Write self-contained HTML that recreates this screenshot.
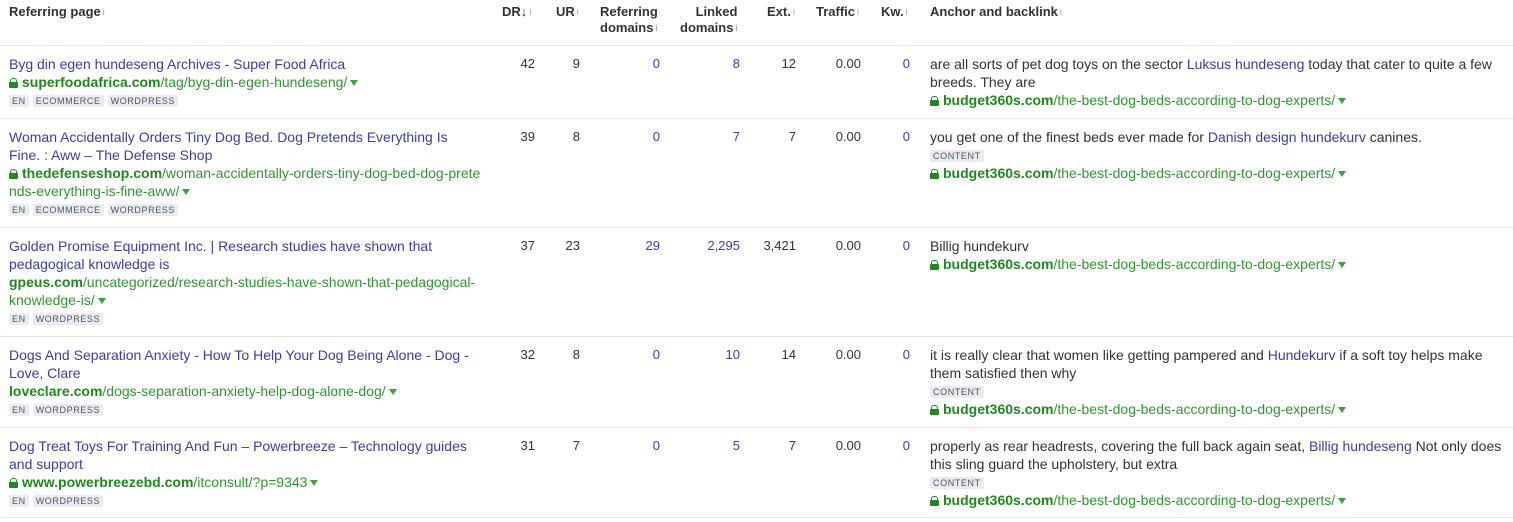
<!DOCTYPE html>
<html><head><meta charset="utf-8"><style>
*{margin:0;padding:0;box-sizing:border-box}
body{width:1513px;height:522px;background:#fff;font-family:"Liberation Sans",Arial,sans-serif;font-size:14px;color:#333;position:relative;overflow:hidden}
.h{position:absolute;top:4px;font-weight:bold;color:#333;line-height:16px;font-size:13px}
.h i{font-style:normal;font-weight:normal;color:#999;font-size:9px;vertical-align:top;margin-left:2px}
.r{text-align:right}
.row{position:absolute;left:0;width:1513px;border-top:1px solid #e4e4e4}
.c{position:absolute;top:9px;line-height:18px}
.n{font-size:13px}
.t{color:#3c3cad}
.g{color:#2f972f}
.g b{color:#1e8a1e}
.tag{display:inline-block;background:#e8ebf1;color:#555;font-size:9px;line-height:12px;padding:0 3px;margin-right:4px;border-radius:2px;letter-spacing:.6px;vertical-align:middle}
.lk{display:inline-block;width:9px;height:10px;position:relative;vertical-align:-1px;margin-right:4px}
.lk:before{content:"";position:absolute;left:1px;top:0;width:5px;height:5px;border:1.5px solid #1e8a1e;border-bottom:none;border-radius:3px 3px 0 0}
.lk:after{content:"";position:absolute;left:0;top:4px;width:9px;height:6px;background:#1e8a1e;border-radius:1px}
.ar{display:inline-block;width:0;height:0;border-left:4px solid transparent;border-right:4px solid transparent;border-top:6px solid #3fa03f;margin-left:3px;vertical-align:1px}
.bl{color:#3c3cad}
</style></head><body>
<div class="h" style="left:9px">Referring page<i>i</i></div>
<div class="h" style="left:502px">DR&#8595;<i>i</i></div>
<div class="h" style="left:556px">UR<i>i</i></div>
<div class="h" style="left:600px">Referring<br>domains<i>i</i></div>
<div class="h r" style="left:680px">Linked<br>domains<i>i</i></div>
<div class="h" style="left:767px">Ext.<i>i</i></div>
<div class="h" style="left:816px">Traffic<i>i</i></div>
<div class="h" style="left:881px">Kw.<i>i</i></div>
<div class="h" style="left:930px">Anchor and backlink<i>i</i></div>

<div class="row" style="top:45px;height:73px">
<div class="c" style="left:9px;width:480px"><div class="t">Byg din egen hundeseng Archives - Super Food Africa</div><div class="g"><span class="lk"></span><b>superfoodafrica.com</b>/tag/byg-din-egen-hundeseng/<span class="ar"></span></div><div><span class="tag">EN</span><span class="tag">ECOMMERCE</span><span class="tag">WORDPRESS</span></div></div>
<div class="c n r" style="right:978px">42</div><div class="c n r" style="right:933px">9</div><div class="c n r t" style="right:853px">0</div><div class="c n r t" style="right:773px">8</div><div class="c n r" style="right:717px">12</div><div class="c n r" style="right:652px">0.00</div><div class="c n r t" style="right:603px">0</div>
<div class="c" style="left:930px;width:575px">are all sorts of pet dog toys on the sector <span class="bl">Luksus hundeseng</span> today that cater to quite a few breeds. They are<div class="g"><span class="lk"></span><b>budget360s.com</b>/the-best-dog-beds-according-to-dog-experts/<span class="ar"></span></div></div>
</div>

<div class="row" style="top:118px;height:109px">
<div class="c" style="left:9px;width:480px"><div class="t">Woman Accidentally Orders Tiny Dog Bed. Dog Pretends Everything Is<br>Fine. : Aww – The Defense Shop</div><div class="g"><span class="lk"></span><b>thedefenseshop.com</b>/woman-accidentally-orders-tiny-dog-bed-dog-prete<br>nds-everything-is-fine-aww/<span class="ar"></span></div><div><span class="tag">EN</span><span class="tag">ECOMMERCE</span><span class="tag">WORDPRESS</span></div></div>
<div class="c n r" style="right:978px">39</div><div class="c n r" style="right:933px">8</div><div class="c n r t" style="right:853px">0</div><div class="c n r t" style="right:773px">7</div><div class="c n r" style="right:717px">7</div><div class="c n r" style="right:652px">0.00</div><div class="c n r t" style="right:603px">0</div>
<div class="c" style="left:930px;width:575px">you get one of the finest beds ever made for <span class="bl">Danish design hundekurv</span> canines.<div><span class="tag">CONTENT</span></div><div class="g"><span class="lk"></span><b>budget360s.com</b>/the-best-dog-beds-according-to-dog-experts/<span class="ar"></span></div></div>
</div>

<div class="row" style="top:227px;height:109px">
<div class="c" style="left:9px;width:480px"><div class="t">Golden Promise Equipment Inc. | Research studies have shown that<br>pedagogical knowledge is</div><div class="g"><b>gpeus.com</b>/uncategorized/research-studies-have-shown-that-pedagogical-<br>knowledge-is/<span class="ar"></span></div><div><span class="tag">EN</span><span class="tag">WORDPRESS</span></div></div>
<div class="c n r" style="right:978px">37</div><div class="c n r" style="right:933px">23</div><div class="c n r t" style="right:853px">29</div><div class="c n r t" style="right:773px">2,295</div><div class="c n r" style="right:717px">3,421</div><div class="c n r" style="right:652px">0.00</div><div class="c n r t" style="right:603px">0</div>
<div class="c" style="left:930px;width:575px">Billig hundekurv<div class="g"><span class="lk"></span><b>budget360s.com</b>/the-best-dog-beds-according-to-dog-experts/<span class="ar"></span></div></div>
</div>

<div class="row" style="top:336px;height:91px">
<div class="c" style="left:9px;width:480px"><div class="t">Dogs And Separation Anxiety - How To Help Your Dog Being Alone - Dog -<br>Love, Clare</div><div class="g"><b>loveclare.com</b>/dogs-separation-anxiety-help-dog-alone-dog/<span class="ar"></span></div><div><span class="tag">EN</span><span class="tag">WORDPRESS</span></div></div>
<div class="c n r" style="right:978px">32</div><div class="c n r" style="right:933px">8</div><div class="c n r t" style="right:853px">0</div><div class="c n r t" style="right:773px">10</div><div class="c n r" style="right:717px">14</div><div class="c n r" style="right:652px">0.00</div><div class="c n r t" style="right:603px">0</div>
<div class="c" style="left:930px;width:575px">it is really clear that women like getting pampered and <span class="bl">Hundekurv</span> if a soft toy helps make them satisfied then why<div><span class="tag">CONTENT</span></div><div class="g"><span class="lk"></span><b>budget360s.com</b>/the-best-dog-beds-according-to-dog-experts/<span class="ar"></span></div></div>
</div>

<div class="row" style="top:427px;height:91px;border-bottom:1px solid #e4e4e4">
<div class="c" style="left:9px;width:480px"><div class="t">Dog Treat Toys For Training And Fun – Powerbreeze – Technology guides<br>and support</div><div class="g"><span class="lk"></span><b>www.powerbreezebd.com</b>/itconsult/?p=9343<span class="ar"></span></div><div><span class="tag">EN</span><span class="tag">WORDPRESS</span></div></div>
<div class="c n r" style="right:978px">31</div><div class="c n r" style="right:933px">7</div><div class="c n r t" style="right:853px">0</div><div class="c n r t" style="right:773px">5</div><div class="c n r" style="right:717px">7</div><div class="c n r" style="right:652px">0.00</div><div class="c n r t" style="right:603px">0</div>
<div class="c" style="left:930px;width:575px">properly as rear headrests, covering the full back again seat, <span class="bl">Billig hundeseng</span> Not only does this sling guard the upholstery, but extra<div><span class="tag">CONTENT</span></div><div class="g"><span class="lk"></span><b>budget360s.com</b>/the-best-dog-beds-according-to-dog-experts/<span class="ar"></span></div></div>
</div>
</body></html>
